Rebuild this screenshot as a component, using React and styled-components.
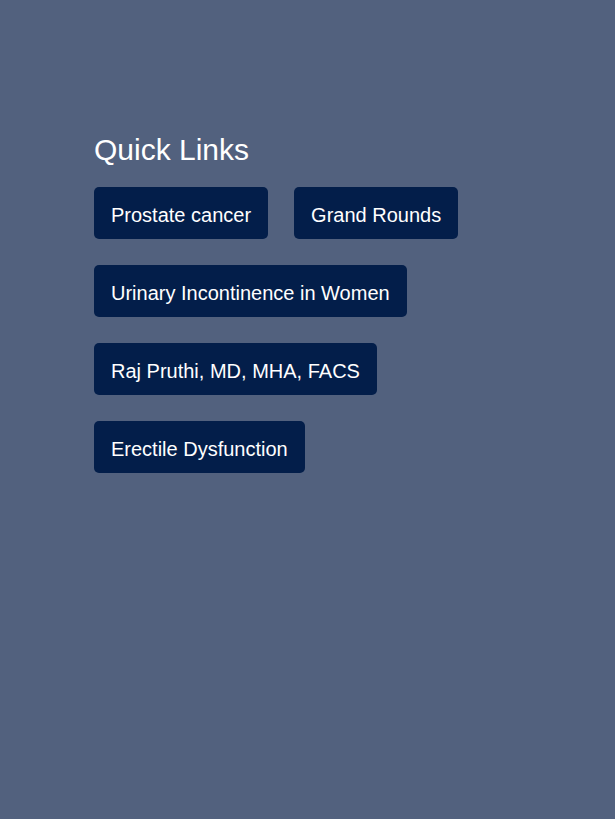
import React from "react";
import styled, { createGlobalStyle } from "styled-components";

const Global = createGlobalStyle`
  html, body { margin: 0; padding: 0; background: #52617e; }
  body { font-family: "Liberation Sans", Arial, sans-serif; }
`;

const Page = styled.div`
  min-height: 819px;
  background: #52617e;
  padding: 133px 94px 0;
  box-sizing: border-box;
`;

const Title = styled.h2`
  margin: 0 0 20px;
  font-size: 30px;
  font-weight: 400;
  line-height: normal;
  color: #ffffff;
`;

const Links = styled.div`
  display: flex;
  flex-wrap: wrap;
  gap: 26px 26px;
  align-items: flex-start;
`;

const LinkButton = styled.a`
  display: inline-block;
  background: #031e4a;
  color: #ffffff;
  font-size: 20px;
  line-height: 24px;
  padding: 16px 17px 12px;
  border-radius: 5px;
  text-decoration: none;
  white-space: nowrap;
`;

const links = [
  "Prostate cancer",
  "Grand Rounds",
  "Urinary Incontinence in Women",
  "Raj Pruthi, MD, MHA, FACS",
  "Erectile Dysfunction",
];

export default function App() {
  return (
    <>
      <Global />
      <Page>
        <Title>Quick Links</Title>
        <Links>
          {links.map((l) => (
            <LinkButton key={l} href="#">
              {l}
            </LinkButton>
          ))}
        </Links>
      </Page>
    </>
  );
}
